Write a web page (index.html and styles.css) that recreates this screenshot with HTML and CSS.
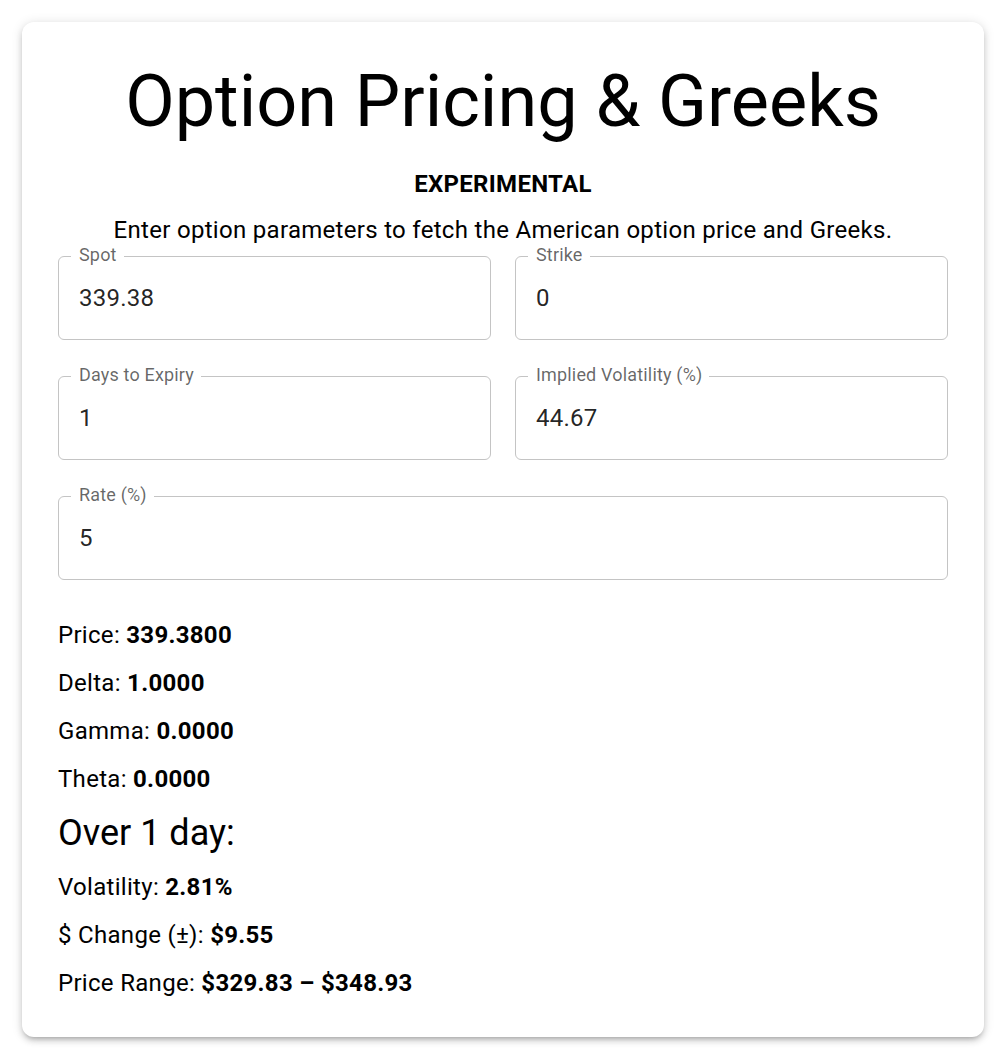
FILE: index.html
```html
<!DOCTYPE html>
<html lang="en">
<head>
<meta charset="utf-8">
<title>Option Pricing &amp; Greeks</title>
<link rel="stylesheet" href="styles.css">
</head>
<body>
<main class="card">
  <h1 class="title">Option Pricing &amp; Greeks</h1>
  <div class="badge">EXPERIMENTAL</div>
  <p class="intro">Enter option parameters to fetch the American option price and Greeks.</p>
  <div class="fields">
    <div class="field"><span class="label">Spot</span><input class="input" type="text" value="339.38"></div>
    <div class="field"><span class="label">Strike</span><input class="input" type="text" value="0"></div>
    <div class="field"><span class="label">Days to Expiry</span><input class="input" type="text" value="1"></div>
    <div class="field"><span class="label">Implied Volatility (%)</span><input class="input" type="text" value="44.67"></div>
    <div class="field field-wide"><span class="label">Rate (%)</span><input class="input" type="text" value="5"></div>
  </div>
  <div class="results">
    <p class="row">Price: <b>339.3800</b></p>
    <p class="row">Delta: <b>1.0000</b></p>
    <p class="row">Gamma: <b>0.0000</b></p>
    <p class="row">Theta: <b>0.0000</b></p>
    <h2 class="section">Over 1 day:</h2>
    <p class="row">Volatility: <b>2.81%</b></p>
    <p class="row">$ Change (±): <b>$9.55</b></p>
    <p class="row">Price Range: <b>$329.83 – $348.93</b></p>
  </div>
</main>
</body>
</html>
```

FILE: styles.css
```css
* { box-sizing: border-box; }
html, body { background: #fff; }
body {
  margin: 0;
  padding: 22px 18px 22px 22px;
  font-family: Roboto, "Liberation Sans", Arial, sans-serif;
  color: rgba(0,0,0,0.87);
  letter-spacing: 0.3px;
}
.card {
  width: 962px;
  background: #fff;
  border-radius: 12px;
  padding: 36px 36px 36px 36px;
  box-shadow: 0 4px 4px -3px rgba(0,0,0,0.2), 0 4px 6px 0 rgba(0,0,0,0.14), 0 1px 12px 0 rgba(0,0,0,0.12);
}
.title {
  margin: 2px 0 0;
  text-align: center;
  font-size: 72px;
  font-weight: 400;
  line-height: 84px;
  letter-spacing: 0;
  color: #000;
}
.badge {
  margin-top: 22px;
  text-align: center;
  font-size: 24px;
  font-weight: 700;
  line-height: 36px;
  color: #000;
}
.intro {
  margin: 10px 0 0;
  text-align: center;
  font-size: 24px;
  line-height: 36px;
  color: #000;
}
.fields {
  margin-top: 8px;
  display: grid;
  grid-template-columns: 1fr 1fr;
  column-gap: 24px;
  row-gap: 36px;
}
.field {
  position: relative;
  height: 84px;
  border: 1px solid #c4c4c4;
  border-radius: 6px;
  display: flex;
  align-items: center;
}
.field-wide { grid-column: 1 / span 2; }
.label {
  position: absolute;
  top: -13px;
  left: 12px;
  padding: 0 7px 0 8px;
  background: #fff;
  font-size: 18px;
  line-height: 1.2;
  letter-spacing: 0.17px;
  color: rgba(0,0,0,0.6);
}
.input {
  width: 100%;
  border: 0;
  outline: 0;
  background: transparent;
  padding: 0 20px;
  height: 28px;
  font-family: inherit;
  font-size: 24px;
  letter-spacing: 0.25px;
  color: rgba(0,0,0,0.87);
}
.results {
  margin-top: 37px;
  display: flex;
  flex-direction: column;
  gap: 12px;
}
.row {
  margin: 0;
  font-size: 24px;
  line-height: 36px;
  color: #000;
}
.row b { font-weight: 700; }
.section {
  margin: 0;
  font-size: 36px;
  font-weight: 400;
  line-height: 48px;
  letter-spacing: 0;
  color: #000;
}
```
